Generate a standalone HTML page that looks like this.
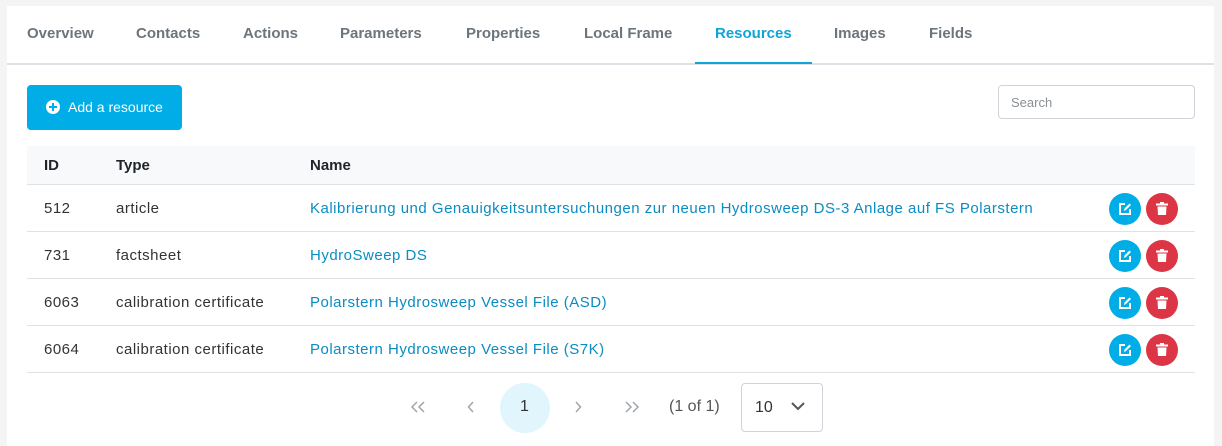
<!DOCTYPE html>
<html><head><style>
body{margin:0;width:1222px;height:442px;background:#f4f4f4;font-family:"Liberation Sans",sans-serif;overflow:hidden;position:relative}
.card{position:absolute;left:7px;top:6px;width:1207px;height:440px;background:#fff}
.tabs{position:absolute;left:0;top:0;width:1207px;height:57px;border-bottom:2px solid #dee2e6}
.tab{position:absolute;top:19px;font-size:15px;font-weight:bold;color:#6c757d}
.act{color:#0ea5d8}
.ul{position:absolute;left:688px;top:56px;width:117px;height:2px;background:#0ea5d8}
.btn{position:absolute;left:20px;top:79px;width:155px;height:45px;background:#00ade6;border-radius:4px;color:#fff;font-size:14px}
.btn span{position:absolute;left:41px;top:14px}
.plus{position:absolute;left:19px;top:15px;width:14px;height:14px;border-radius:50%;background:#fff}
.plus:before,.plus:after{content:"";position:absolute;background:#00ade6}
.plus:before{left:3px;top:6px;width:8px;height:2px}.plus:after{left:6px;top:3px;width:2px;height:8px}
.search{position:absolute;left:991px;top:79px;width:195px;height:32px;border:1px solid #ced4da;border-radius:4px;font-size:13px;color:#8a9096}
.search span{position:absolute;left:12px;top:9px}
.row{position:absolute;left:20px;width:1168px;border-bottom:1px solid #dee2e6;font-size:15px;color:#333;letter-spacing:.5px}
.row div{position:absolute;top:15px}
.hd{background:#f8f9fa;font-weight:bold;color:#212529;letter-spacing:0}
a{color:#0a8cc4;text-decoration:none}
.c{position:absolute;width:32px;height:32px;border-radius:50%;top:8px}
.c svg{position:absolute;left:9px;top:9px}
.e{left:1082px;background:#00ade6}.d{left:1119px;background:#dc3545}
.ch{position:absolute;top:401px}
</style></head><body>
<div class="card">
<div class="tabs">
<span class="tab" style="left:20px">Overview</span>
<span class="tab" style="left:129px">Contacts</span>
<span class="tab" style="left:236px">Actions</span>
<span class="tab" style="left:333px">Parameters</span>
<span class="tab" style="left:459px">Properties</span>
<span class="tab" style="left:577px">Local Frame</span>
<span class="tab act" style="left:708px">Resources</span>
<span class="tab" style="left:827px">Images</span>
<span class="tab" style="left:922px">Fields</span>
<div class="ul"></div>
</div>
<div class="btn"><div class="plus"></div><span>Add a resource</span></div>
<div class="search"><span>Search</span></div>
<div class="row hd" style="top:140px;height:38px"><div style="left:17px;top:11px">ID</div><div style="left:89px;top:11px">Type</div><div style="left:283px;top:11px">Name</div></div>
<div class="row" style="top:179px;height:46px"><div style="left:17px">512</div><div style="left:89px">article</div><div style="left:283px"><a>Kalibrierung und Genauigkeitsuntersuchungen zur neuen Hydrosweep DS-3 Anlage auf FS Polarstern</a></div><span class="c e"></span><span class="c d"></span></div>
<div class="row" style="top:226px;height:46px"><div style="left:17px">731</div><div style="left:89px">factsheet</div><div style="left:283px"><a>HydroSweep DS</a></div><span class="c e"></span><span class="c d"></span></div>
<div class="row" style="top:273px;height:46px"><div style="left:17px">6063</div><div style="left:89px">calibration certificate</div><div style="left:283px"><a>Polarstern Hydrosweep Vessel File (ASD)</a></div><span class="c e"></span><span class="c d"></span></div>
<div class="row" style="top:320px;height:46px"><div style="left:17px">6064</div><div style="left:89px">calibration certificate</div><div style="left:283px"><a>Polarstern Hydrosweep Vessel File (S7K)</a></div><span class="c e"></span><span class="c d"></span></div>
</div>
<svg class="ch" style="left:410px" width="16" height="12"><path d="M7 1L2 6L7 11M14 1L9 6L14 11" fill="none" stroke="#a0a6ab" stroke-width="1.5"/></svg>
<svg class="ch" style="left:467px" width="8" height="12"><path d="M6 1L1.5 6L6 11" fill="none" stroke="#a0a6ab" stroke-width="1.5"/></svg>
<div style="position:absolute;left:500px;top:383px;width:50px;height:50px;border-radius:50%;background:#e1f5fc"></div>
<span style="position:absolute;left:520px;top:398px;font-size:16px;color:#333">1</span>
<svg class="ch" style="left:574px" width="8" height="12"><path d="M2 1L6.5 6L2 11" fill="none" stroke="#a0a6ab" stroke-width="1.5"/></svg>
<svg class="ch" style="left:624px" width="16" height="12"><path d="M2 1L7 6L2 11M9 1L14 6L9 11" fill="none" stroke="#a0a6ab" stroke-width="1.5"/></svg>
<span style="position:absolute;left:669px;top:398px;font-size:16px;color:#555">(1 of 1)</span>
<div style="position:absolute;left:741px;top:383px;width:80px;height:47px;border:1px solid #ced4da;border-radius:4px"><span style="position:absolute;left:13px;top:15px;font-size:16px;color:#333">10</span>
<svg style="position:absolute;left:49px;top:18px" width="14" height="9"><path d="M1 1L7 7L13 1" fill="none" stroke="#555" stroke-width="2"/></svg></div>
<script>
document.querySelectorAll('.e').forEach(function(x){x.innerHTML='<svg width="14" height="14"><path d="M7 2H2V12H12V7" fill="none" stroke="#fff" stroke-width="2"/><path d="M6 9L6.5 6.5L11.5 1.5L13 3L8 8Z" fill="#fff"/></svg>';});
document.querySelectorAll('.d').forEach(function(x){x.innerHTML='<svg width="14" height="14"><rect x="1" y="1.5" width="12" height="2" fill="#fff"/><rect x="5" y="0" width="4" height="2" fill="#fff"/><path d="M2.5 4.5H11.5L11 13H3Z" fill="#fff"/></svg>';});
</script>
</body></html>
